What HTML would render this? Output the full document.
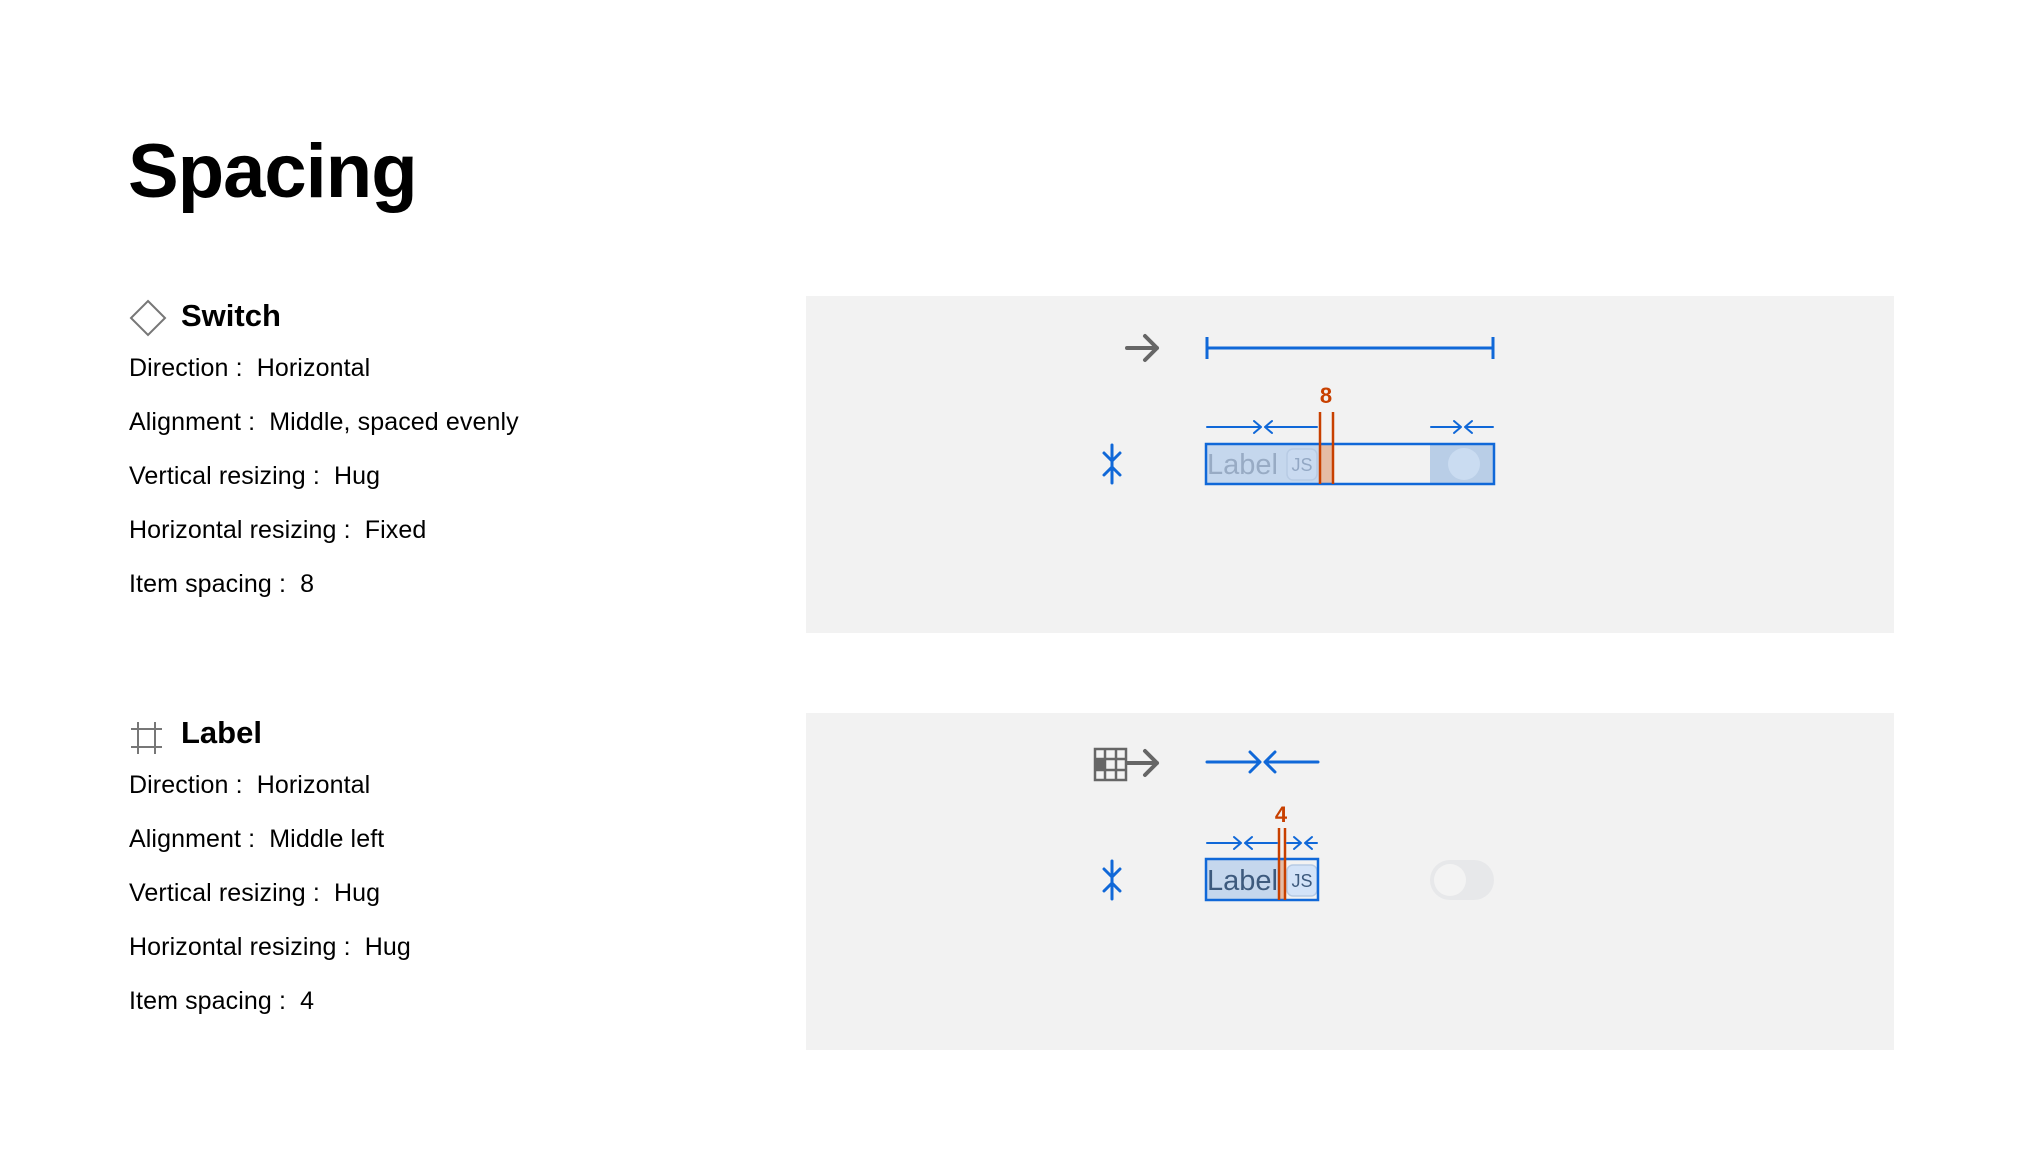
<!DOCTYPE html>
<html><head><meta charset="utf-8"><style>
html,body{margin:0;padding:0;background:#fff;width:2022px;height:1176px;overflow:hidden;font-family:"Liberation Sans",sans-serif;color:#000}
h1{position:absolute;left:128px;top:134px;margin:0;font-size:76px;font-weight:bold;line-height:1;letter-spacing:-1px}
.h{position:absolute;left:181px;font-size:31px;font-weight:bold;line-height:1}
.l{position:absolute;left:129px;font-size:25px;line-height:1;letter-spacing:0.1px;white-space:pre}
.p{position:absolute;left:806px;width:1088px;height:337px;background:#f2f2f2}
svg{position:absolute;left:0;top:0}
</style></head><body>
<h1>Spacing</h1>

<div class="h" style="top:300px">Switch</div>
<div class="l" style="top:356px">Direction :  Horizontal</div>
<div class="l" style="top:410px">Alignment :  Middle, spaced evenly</div>
<div class="l" style="top:464px">Vertical resizing :  Hug</div>
<div class="l" style="top:518px">Horizontal resizing :  Fixed</div>
<div class="l" style="top:572px">Item spacing :  8</div>

<div class="h" style="top:717px">Label</div>
<div class="l" style="top:773px">Direction :  Horizontal</div>
<div class="l" style="top:827px">Alignment :  Middle left</div>
<div class="l" style="top:881px">Vertical resizing :  Hug</div>
<div class="l" style="top:935px">Horizontal resizing :  Hug</div>
<div class="l" style="top:989px">Item spacing :  4</div>

<div class="p" style="top:296px"></div>
<div class="p" style="top:713px"></div>

<svg width="2022" height="1176" viewBox="0 0 2022 1176" fill="none">
<path d="M148 301 L165 318 L148 335 L131 318 Z" stroke="#777" stroke-width="2"/>
<g stroke="#777" stroke-width="2">
<path d="M138 722v32M155 722v32M131 729h31M131 747h31"/>
</g>

<path d="M1127 348h30M1145 336l12 12-12 12" stroke="#666" stroke-width="4" stroke-linecap="round" stroke-linejoin="round"/>
<path d="M1207 348h286M1207 337v22M1493 337v22" stroke="#1068d8" stroke-width="3"/>
<text x="1326" y="403" font-family="Liberation Sans" font-weight="bold" font-size="22" fill="#c84000" text-anchor="middle">8</text>
<rect x="1206" y="444" width="113" height="40" fill="#c5d7ed"/>
<rect x="1319" y="444" width="14" height="40" fill="#e5bca5"/>
<rect x="1430" y="444" width="64" height="40" fill="#b9cee7"/>
<circle cx="1464" cy="464" r="16" fill="#cadcf1"/>
<rect x="1287" y="449" width="30" height="31" rx="6" fill="#c9daf0" stroke="#b8cbe4" stroke-width="1.5"/>
<text x="1302" y="471" font-family="Liberation Sans" font-size="18" fill="#93a8c4" text-anchor="middle">JS</text>
<text x="1207" y="474" font-family="Liberation Sans" font-size="29" fill="#98abc4">Label</text>
<rect x="1206" y="444" width="288" height="40" stroke="#1068d8" stroke-width="2.5"/>
<path d="M1320 412v72M1333 412v72" stroke="#c84000" stroke-width="2.5"/>
<g stroke="#1068d8" stroke-width="2" stroke-linecap="round" stroke-linejoin="round">
<path d="M1207 427h54M1265 427h52M1254 421l7 6-7 6M1272 421l-7 6 7 6"/>
<path d="M1431 427h30M1465 427h28M1454 421l7 6-7 6M1472 421l-7 6 7 6"/>
</g>
<g stroke="#1068d8" stroke-width="3" stroke-linecap="round" stroke-linejoin="round">
<path d="M1112 445v38M1104 453l8 8 8-8M1104 475l8-8 8 8"/>
</g>

<g stroke="#666" stroke-width="2.5">
<rect x="1095" y="749" width="31" height="31" fill="none"/>
<path d="M1105 749v31M1116 749v31M1095 759h31M1095 770h31"/>
</g>
<rect x="1095" y="759" width="10" height="11" fill="#666"/>
<path d="M1127 763h30M1145 751l12 12-12 12" stroke="#666" stroke-width="4" stroke-linecap="round" stroke-linejoin="round"/>
<g stroke="#1068d8" stroke-width="3" stroke-linecap="round" stroke-linejoin="round">
<path d="M1207 762h53M1265 762h53M1250 752l10 10-10 10M1275 752l-10 10 10 10"/>
</g>
<text x="1281" y="822" font-family="Liberation Sans" font-weight="bold" font-size="22" fill="#c84000" text-anchor="middle">4</text>
<rect x="1206" y="859" width="73" height="41" fill="#c5d7ed"/>
<rect x="1279" y="859" width="6" height="41" fill="#e5bca5"/>
<rect x="1287" y="865" width="30" height="31" rx="6" fill="#d3e3f8" stroke="#b8cbe4" stroke-width="1.5"/>
<text x="1302" y="887" font-family="Liberation Sans" font-size="18" fill="#3d5a7d" text-anchor="middle">JS</text>
<text x="1207" y="890" font-family="Liberation Sans" font-size="29" fill="#3d5a7d">Label</text>
<rect x="1206" y="859" width="112" height="41" stroke="#1068d8" stroke-width="2.5"/>
<path d="M1279 828v72M1285 828v72" stroke="#c84000" stroke-width="2.5"/>
<g stroke="#1068d8" stroke-width="2" stroke-linecap="round" stroke-linejoin="round">
<path d="M1207 843h34M1245 843h32M1234 837l7 6-7 6M1252 837l-7 6 7 6"/>
<path d="M1287 843h14M1305 843h12M1294 837l7 6-7 6M1312 837l-7 6 7 6"/>
</g>
<rect x="1430" y="860" width="64" height="40" rx="20" fill="#e7e8ea"/>
<circle cx="1450" cy="880" r="16" fill="#f3f3f3"/>
<g stroke="#1068d8" stroke-width="3" stroke-linecap="round" stroke-linejoin="round">
<path d="M1112 861v38M1104 869l8 8 8-8M1104 891l8-8 8 8"/>
</g>
</svg>
</body></html>
